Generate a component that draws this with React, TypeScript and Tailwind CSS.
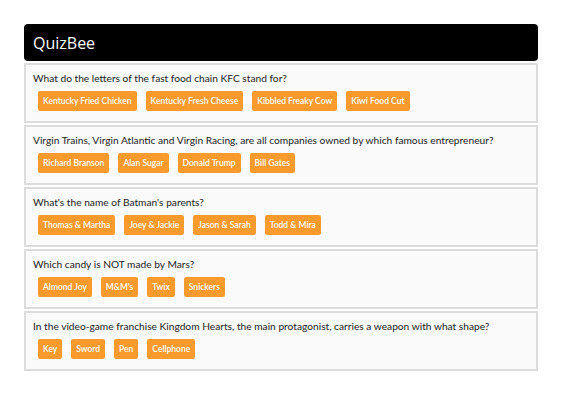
const questions = [
  {
    q: 'What do the letters of the fast food chain KFC stand for?',
    a: ['Kentucky Fried Chicken', 'Kentucky Fresh Cheese', 'Kibbled Freaky Cow', 'Kiwi Food Cut'],
  },
  {
    q: 'Virgin Trains, Virgin Atlantic and Virgin Racing, are all companies owned by which famous entrepreneur?',
    a: ['Richard Branson', 'Alan Sugar', 'Donald Trump', 'Bill Gates'],
  },
  {
    q: "What's the name of Batman's parents?",
    a: ['Thomas & Martha', 'Joey & Jackie', 'Jason & Sarah', 'Todd & Mira'],
  },
  {
    q: 'Which candy is NOT made by Mars?',
    a: ['Almond Joy', "M&M's", 'Twix', 'Snickers'],
  },
  {
    q: 'In the video-game franchise Kingdom Hearts, the main protagonist, carries a weapon with what shape?',
    a: ['Key', 'Sword', 'Pen', 'Cellphone'],
  },
];

function QuestionBox({ q, a }: { q: string; a: string[] }) {
  return (
    <div className="h-[60px] border-2 border-[#dcdcdc] bg-[#fafafa] px-[7px] pt-[5px]">
      <div className="whitespace-nowrap text-[10.2px] leading-[16px] text-[#222]">{q}</div>
      <div className="flex gap-[9px] pl-[5px] pt-[5px]">
        {a.map((ans) => (
          <button
            key={ans}
            className="h-[20px] rounded-[2px] bg-[#f99a2d] px-[5px] text-[8.5px] font-semibold text-white"
          >
            {ans}
          </button>
        ))}
      </div>
    </div>
  );
}

export default function App() {
  return (
    <div className="min-h-[399px] bg-white pt-[24px] pl-[24px] font-['Lato',sans-serif]">
      <div className="w-[514px]">
        <div className="flex h-[37px] items-center rounded-[4px] bg-black px-[9px] font-['Open_Sans',sans-serif] text-[16px] text-white">
          QuizBee
        </div>
        <div className="mt-[2px] flex flex-col gap-[2px]">
          {questions.map((item) => (
            <QuestionBox key={item.q} q={item.q} a={item.a} />
          ))}
        </div>
      </div>
    </div>
  );
}
